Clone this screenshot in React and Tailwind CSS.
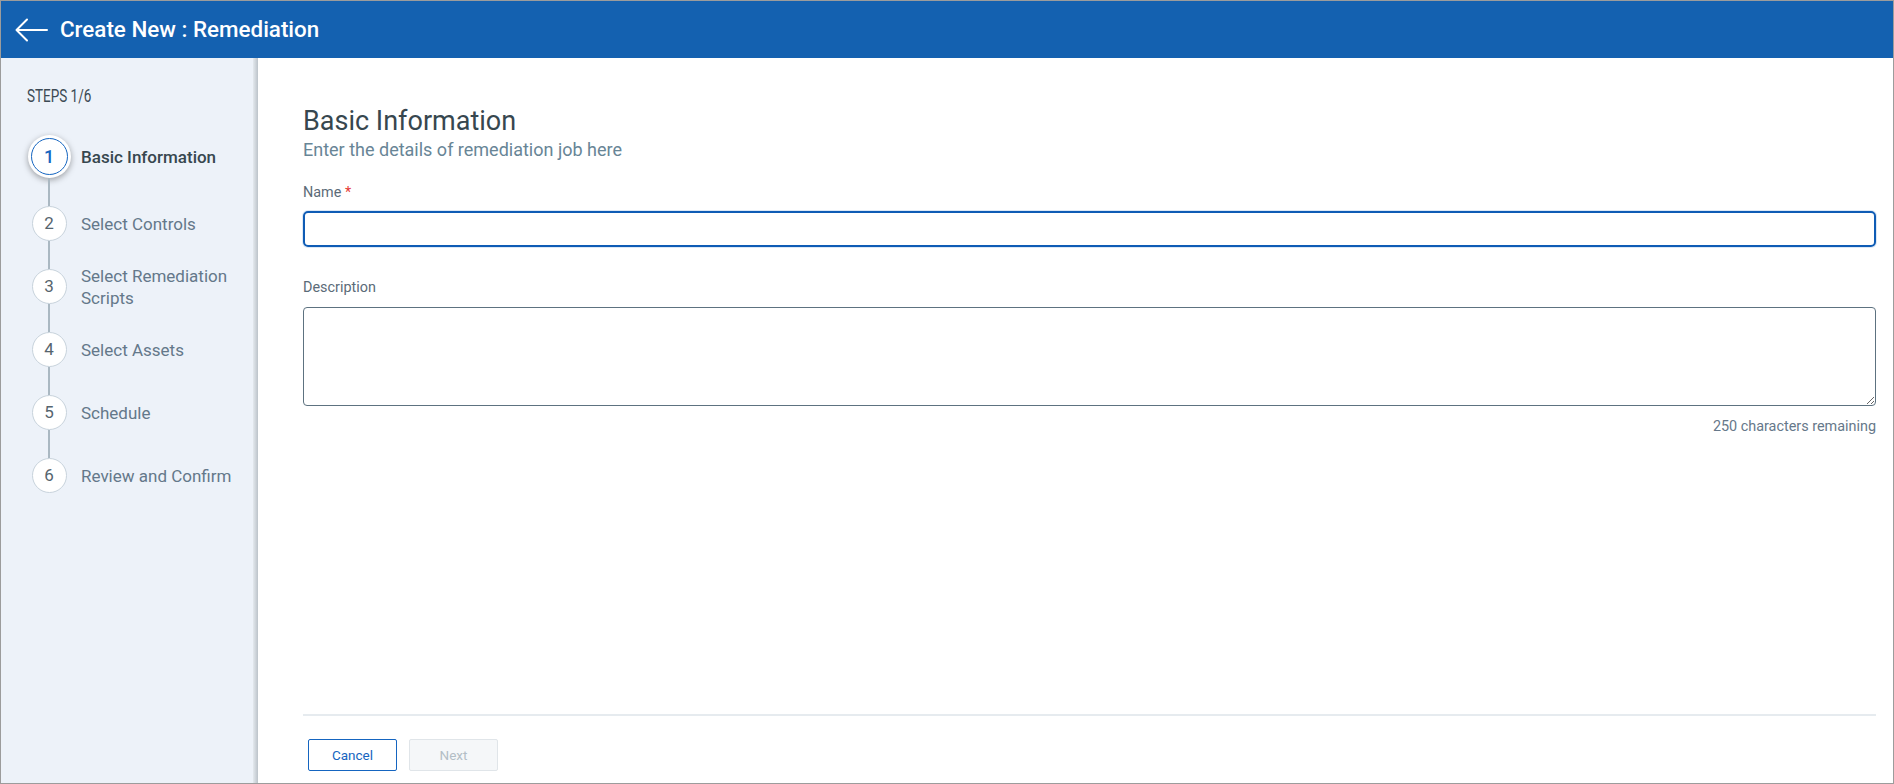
import React from "react";

const steps = [
  { n: 1, label: "Basic Information" },
  { n: 2, label: "Select Controls" },
  { n: 3, label: "Select Remediation Scripts" },
  { n: 4, label: "Select Assets" },
  { n: 5, label: "Schedule" },
  { n: 6, label: "Review and Confirm" },
];

function Step({ n, label, first, last }) {
  const active = n === 1;
  return (
    <div className={`flex items-stretch ${first ? "h-[71px]" : "h-[63px]"}`}>
      <div className="w-[44px] flex flex-col items-center">
        <div className={`flex-1 w-[2px] ${first ? "bg-transparent" : "bg-[#aab8c2]"}`} />
        {active ? (
          <div className="w-[43px] h-[43px] rounded-full bg-white shadow-[0_2px_6px_rgba(0,0,0,0.35)] flex items-center justify-center">
            <div className="w-[37px] h-[37px] rounded-full border-[1.5px] border-[#1565c0] flex items-center justify-center text-[18px] font-medium text-[#1565c0]">
              {n}
            </div>
          </div>
        ) : (
          <div className="w-[35px] h-[35px] rounded-full bg-white border border-[#c8d3dc] flex items-center justify-center text-[17px] text-[#56646e]">
            {n}
          </div>
        )}
        <div className={`flex-1 w-[2px] ${last ? "bg-transparent" : "bg-[#aab8c2]"}`} />
      </div>
      <div
        className={`ml-[10px] w-[165px] flex items-center text-[17px] leading-[22px] ${
          active ? "font-medium text-[#37474f]" : "text-[#64788a]"
        }`}
      >
        {label}
      </div>
    </div>
  );
}

export default function App() {
  return (
    <div
      className="w-[1894px] h-[784px] border border-[#9c9c9c] flex flex-col bg-white overflow-hidden"
      style={{ fontFamily: "Roboto, 'Liberation Sans', sans-serif" }}
    >
      <header className="h-[57px] bg-[#1461b0] flex items-center shrink-0">
        <svg width="34" height="24" viewBox="0 0 34 24" className="ml-[13px]" fill="none">
          <path d="M33 12H2.5M13 1.5L2.5 12L13 22.5" stroke="white" strokeWidth="2" strokeLinecap="round" strokeLinejoin="round" />
        </svg>
        <h1 className="ml-[12px] text-[22.4px] font-medium text-white leading-none">Create New : Remediation</h1>
      </header>
      <div className="flex-1 flex min-h-0">
        <aside className="w-[252px] bg-[#edf2f9] pt-[26px] pl-[26px] shrink-0">
          <div className="text-[19px] leading-[24px] text-[#3c4a54] origin-left scale-x-[0.71] whitespace-nowrap">STEPS 1/6</div>
          <div className="mt-[13px] flex flex-col">
            {steps.map((s, i) => (
              <Step key={s.n} {...s} first={i === 0} last={i === steps.length - 1} />
            ))}
          </div>
        </aside>
        <div className="w-[5px] bg-gradient-to-r from-[#e4e9ee] to-[#bcc3ca] shrink-0" />
        <main className="flex-1 flex flex-col pt-[47px] pl-[45px] pr-[17px] pb-[12px]">
          <h2 className="text-[27px] leading-[32px] text-[#37474f]">Basic Information</h2>
          <p className="mt-[2px] text-[18px] leading-[22px] text-[#688596]">Enter the details of remediation job here</p>
          <label className="mt-[22px] text-[14.4px] leading-[20px] text-[#5b6b78]">
            Name <span className="text-[#e53935]">*</span>
          </label>
          <input
            type="text"
            className="mt-[8px] h-[36px] w-full rounded-[5px] border-2 border-[#0f5cb5] outline-none px-3 shadow-[0_0_0_1px_rgba(21,101,192,0.15)]"
          />
          <label className="mt-[31px] text-[14.4px] leading-[20px] text-[#5b6b78]">Description</label>
          <textarea className="mt-[9px] h-[99px] w-full rounded-[4px] border border-[#5d7280] outline-none px-3 py-2" />
          <div className="mt-[11px] text-right text-[14.4px] leading-[20px] text-[#66788a]">250 characters remaining</div>
          <div className="flex-1" />
          <div className="h-[2px] bg-[#e6ebef]" />
          <div className="mt-[23px] flex gap-[12px] ml-[5px]">
            <button className="w-[89px] h-[32px] rounded-[2px] border border-[#1565c0] bg-white text-[13.5px] text-[#1565c0]">Cancel</button>
            <button className="w-[89px] h-[32px] rounded-[2px] border border-[#e0e5e9] bg-[#f5f7f9] text-[13.5px] text-[#b3bec6]">Next</button>
          </div>
        </main>
      </div>
    </div>
  );
}
